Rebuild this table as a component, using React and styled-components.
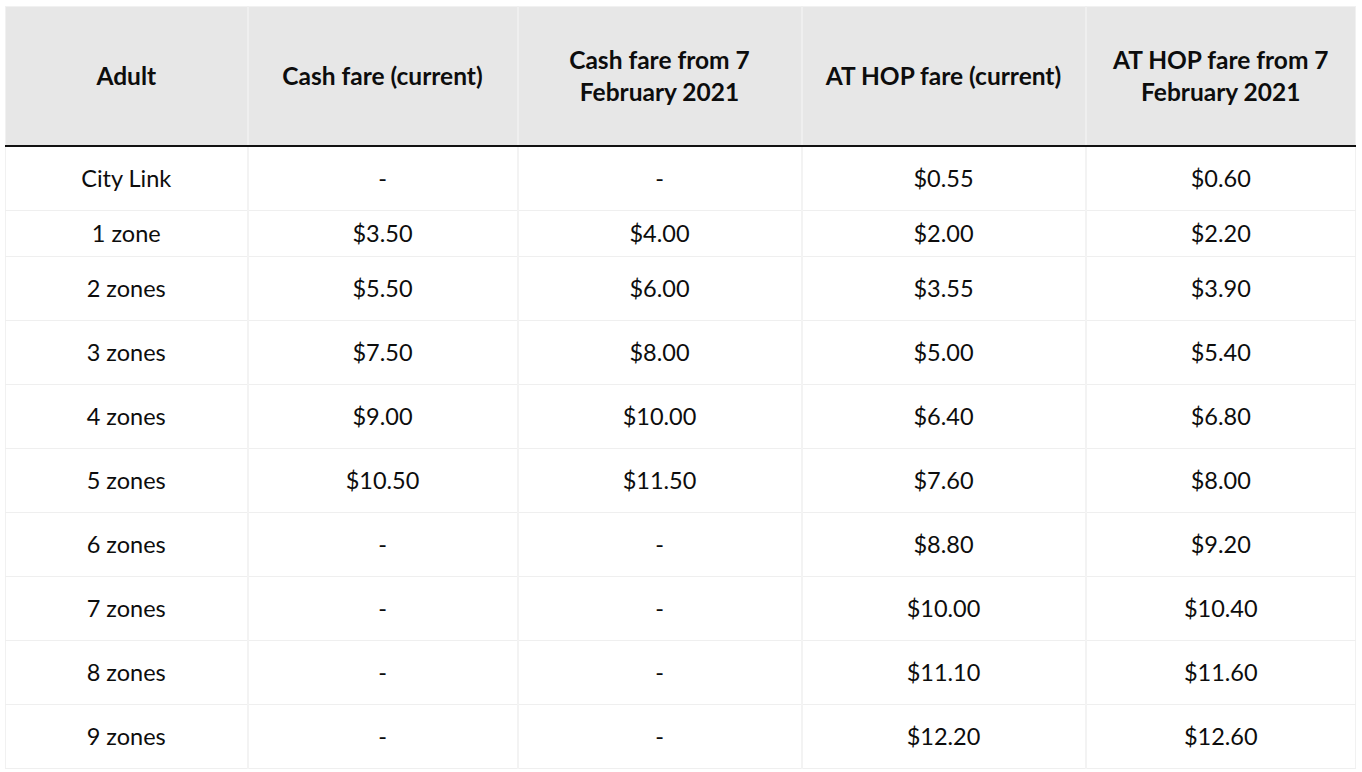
import React from "react";
import styled, { createGlobalStyle } from "styled-components";

const GlobalStyle = createGlobalStyle`
  body {
    margin: 0;
    background: #ffffff;
    font-family: Lato, "Open Sans", sans-serif;
    color: #0d0d0d;
  }
`;

const columns = [
  "Adult",
  "Cash fare (current)",
  "Cash fare from 7 February 2021",
  "AT HOP fare (current)",
  "AT HOP fare from 7 February 2021",
];

const widths = [242, 270, 284, 284, 270];

const rows = [
  ["City Link", "-", "-", "$0.55", "$0.60"],
  ["1 zone", "$3.50", "$4.00", "$2.00", "$2.20"],
  ["2 zones", "$5.50", "$6.00", "$3.55", "$3.90"],
  ["3 zones", "$7.50", "$8.00", "$5.00", "$5.40"],
  ["4 zones", "$9.00", "$10.00", "$6.40", "$6.80"],
  ["5 zones", "$10.50", "$11.50", "$7.60", "$8.00"],
  ["6 zones", "-", "-", "$8.80", "$9.20"],
  ["7 zones", "-", "-", "$10.00", "$10.40"],
  ["8 zones", "-", "-", "$11.10", "$11.60"],
  ["9 zones", "-", "-", "$12.20", "$12.60"],
];

const FareTable = () => {
  return (
    <>
      <GlobalStyle />
      <Wrapper>
        <Table>
          <colgroup>
            {widths.map((w, i) => (
              <col key={i} style={{ width: w }} />
            ))}
          </colgroup>
          <thead>
            <tr>
              {columns.map((c) => (
                <HeadCell key={c}>{c}</HeadCell>
              ))}
            </tr>
          </thead>
          <tbody>
            {rows.map((r, i) => (
              <Row key={r[0]} $short={i === 1}>
                {r.map((v, j) => (
                  <Cell key={j}>{v}</Cell>
                ))}
              </Row>
            ))}
          </tbody>
        </Table>
      </Wrapper>
    </>
  );
};

export default FareTable;

const Wrapper = styled.div`
  padding: 6px 7px 3px 5px;
`;

const Table = styled.table`
  width: 1350px;
  border-collapse: collapse;
  table-layout: fixed;
  border: 1px solid #f1f1f1;
`;

const HeadCell = styled.th`
  height: 138px;
  padding: 0 22px;
  background: #e7e7e7;
  border-right: 2px solid #efefef;
  border-bottom: 2px solid #111111;
  text-align: center;
  vertical-align: middle;
  font-weight: 700;
  font-size: 24.5px;
  line-height: 32px;

  &:last-child {
    border-right: none;
  }
`;

const Row = styled.tr`
  height: ${(p) => (p.$short ? "46px" : "64px")};
  border-bottom: 1px solid #efefef;
`;

const Cell = styled.td`
  padding: 0;
  text-align: center;
  vertical-align: middle;
  font-size: 23.5px;
  border-right: 2px solid #f3f3f3;

  &:last-child {
    border-right: none;
  }
`;
